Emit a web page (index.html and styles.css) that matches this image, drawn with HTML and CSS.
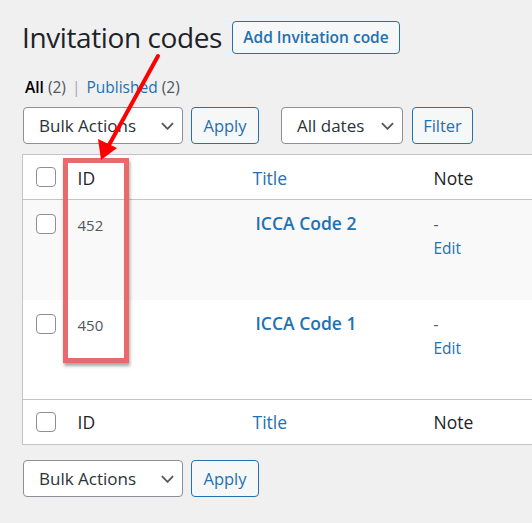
FILE: index.html
```html
<!DOCTYPE html>
<html lang="en">
<head>
<meta charset="utf-8">
<title>Invitation codes</title>
<link rel="stylesheet" href="styles.css">
</head>
<body>
<div class="wrap">
  <div class="heading">
    <h1 class="title">Invitation codes</h1>
    <a class="btn add-new" href="#">Add Invitation code</a>
  </div>
  <ul class="subsubsub">
    <li><a class="current" href="#">All <span class="count">(2)</span></a><span class="sep">|</span></li>
    <li><a href="#">Published <span class="count">(2)</span></a></li>
  </ul>
  <div class="tablenav top">
    <div class="select bulk"><span>Bulk Actions</span><svg class="chev" viewBox="0 0 14 8"><path d="M1 1l6 6 6-6" /></svg></div>
    <button class="btn">Apply</button>
    <div class="select dates"><span>All dates</span><svg class="chev" viewBox="0 0 14 8"><path d="M1 1l6 6 6-6" /></svg></div>
    <button class="btn filter">Filter</button>
  </div>
  <table class="list">
    <colgroup>
      <col class="c-cb"><col class="c-id"><col class="c-title"><col class="c-note">
    </colgroup>
    <thead>
      <tr class="head-row">
        <td class="cb"><span class="box"></span></td>
        <th>ID</th>
        <th><a href="#">Title</a></th>
        <th>Note</th>
      </tr>
    </thead>
    <tbody>
      <tr class="row alt">
        <td class="cb"><span class="box"></span></td>
        <td class="id">452</td>
        <td class="ttl"><a href="#">ICCA Code 2</a></td>
        <td class="note">-<br><a href="#">Edit</a></td>
      </tr>
      <tr class="row">
        <td class="cb"><span class="box"></span></td>
        <td class="id">450</td>
        <td class="ttl"><a href="#">ICCA Code 1</a></td>
        <td class="note">-<br><a href="#">Edit</a></td>
      </tr>
    </tbody>
    <tfoot>
      <tr class="foot-row">
        <td class="cb"><span class="box"></span></td>
        <th>ID</th>
        <th><a href="#">Title</a></th>
        <th>Note</th>
      </tr>
    </tfoot>
  </table>
  <div class="tablenav bottom">
    <div class="select bulk"><span>Bulk Actions</span><svg class="chev" viewBox="0 0 14 8"><path d="M1 1l6 6 6-6" /></svg></div>
    <button class="btn">Apply</button>
  </div>
</div>
<div class="highlight"></div>
<svg class="arrow" width="532" height="523" viewBox="0 0 532 523">
  <line x1="158" y1="56" x2="109" y2="145" />
  <polygon points="101,160 98,139 117,148" />
</svg>
</body>
</html>
```
FILE: styles.css
```css
html, body {
  margin: 0;
  padding: 0;
}
body {
  background: #f0f0f1;
  font-family: "Open Sans", "Noto Sans", sans-serif;
  color: #3c434a;
  width: 532px;
  height: 523px;
  overflow: hidden;
  position: relative;
}
a { color: #2271b1; text-decoration: none; }
.wrap {
  padding: 20px 0 0 22px;
}
.heading {
  display: flex;
  align-items: center;
  gap: 10px;
  height: 34px;
}
.title {
  margin: 0;
  font-size: 28px;
  font-weight: 400;
  color: #1d2327;
  letter-spacing: -0.4px;
  line-height: 34px;
}
.btn {
  box-sizing: border-box;
  display: inline-flex;
  align-items: center;
  justify-content: center;
  border: 1px solid #2271b1;
  border-radius: 4px;
  background: #f6f7f7;
  color: #2271b1;
  font-family: inherit;
  font-size: 16.5px;
  height: 37px;
  padding: 0 12px;
}
.add-new {
  height: 33px;
  font-weight: 600;
  font-size: 15.5px;
  padding: 0 10px;
  width: 168px;
}
.subsubsub {
  list-style: none;
  margin: 0;
  padding: 0;
  display: flex;
  margin-top: 23px;
  margin-left: 3px;
  font-size: 15.5px;
  line-height: 20px;
  color: #50575e;
}
.subsubsub a.current { color: #000; font-weight: 600; }
.subsubsub .count { color: #50575e; font-weight: 400; }
.subsubsub .sep { padding: 0 6px; color: #a7aaad; }
.tablenav {
  display: flex;
  align-items: center;
  height: 37px;
  margin-top: 10px;
  margin-left: 1px;
}
.tablenav .btn { margin-left: 8px; width: 68px; }
.tablenav .btn.filter { margin-left: 9px; width: 61px; }
.select {
  box-sizing: border-box;
  height: 37px;
  border: 1px solid #8c8f94;
  border-radius: 4px;
  background: #fff;
  display: flex;
  align-items: center;
  justify-content: space-between;
  padding: 0 8px 0 15px;
  font-size: 17px;
  color: #2c3338;
}
.select.bulk { width: 160px; }
.select.dates { width: 122px; margin-left: 22px; }
.chev {
  width: 13px;
  height: 8px;
  fill: none;
  stroke: #50575e;
  stroke-width: 2;
}
.list {
  margin-top: 10px;
  border: 1px solid #c3c4c7;
  border-collapse: collapse;
  background: #fff;
  table-layout: fixed;
  width: 620px;
}
.c-cb { width: 43px; }
.c-id { width: 175px; }
.c-title { width: 181px; }
.c-note { width: 221px; }
.list th, .list td {
  text-align: left;
  padding: 0 12px;
  font-weight: 400;
  vertical-align: top;
}
.list td.cb { padding: 0 0 0 13px; }
.head-row, .foot-row { height: 45px; }
.head-row th, .foot-row th {
  font-size: 17.5px;
  color: #1d2327;
  vertical-align: middle;
}
.head-row td, .foot-row td { vertical-align: middle; }
.head-row th, .head-row td { border-bottom: 1px solid #c3c4c7; }
.foot-row th, .foot-row td { border-top: 1px solid #c3c4c7; }
.head-row th { padding-top: 2px; }
.box {
  display: block;
  box-sizing: border-box;
  width: 20px;
  height: 20px;
  border: 1px solid #8c8f94;
  border-radius: 4px;
  background: #fff;
}
.row { height: 100px; }
.row.alt { background: #f9f9f9; }
.row td { padding-top: 12px; }
.row td.cb { padding-top: 14px; }
.row td.id { font-size: 15px; color: #50575e; padding-top: 15px; }
.row td.ttl { font-size: 17.5px; font-weight: 600; padding-top: 11px; padding-left: 15px; }
.row td.note { font-size: 15.5px; color: #50575e; line-height: 24px; padding-top: 12px; }
.bottom { margin-top: 15px; }
.highlight {
  position: absolute;
  left: 63px;
  top: 158px;
  width: 56px;
  height: 195px;
  border: 5px solid #e86b6b;
  box-shadow: 1px 3px 3px rgba(60, 60, 60, 0.45);
}
.arrow {
  position: absolute;
  left: 0;
  top: 0;
  pointer-events: none;
}
.arrow line { stroke: #f00; stroke-width: 4; stroke-linecap: round; }
.arrow polygon { fill: #f00; }
```
